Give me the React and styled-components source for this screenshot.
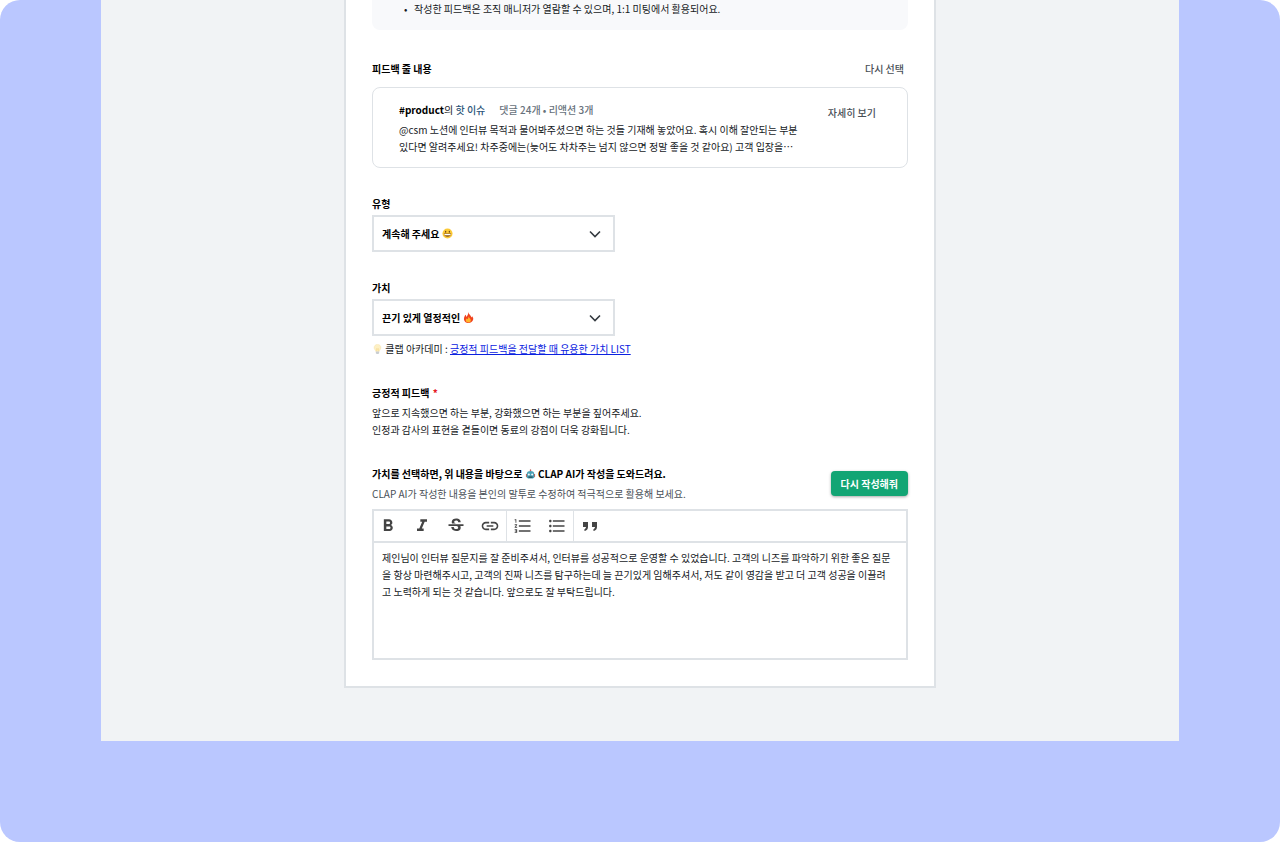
import React from "react";
import styled, { createGlobalStyle } from "styled-components";
import {
  MdFormatBold,
  MdFormatItalic,
  MdStrikethroughS,
  MdInsertLink,
  MdFormatListNumbered,
  MdFormatListBulleted,
} from "react-icons/md";

//toolbar buttons of the editor, every inner array is one group
const toolGroups = [
  [
    { id: "bold", label: "굵게", icon: <MdFormatBold /> },
    { id: "italic", label: "기울임", icon: <MdFormatItalic /> },
    { id: "strike", label: "취소선", icon: <MdStrikethroughS /> },
    { id: "link", label: "링크", icon: <MdInsertLink /> },
  ],
  [
    { id: "ordered", label: "번호 목록", icon: <MdFormatListNumbered /> },
    { id: "bullet", label: "글머리 목록", icon: <MdFormatListBulleted /> },
  ],
  [{ id: "quote", label: "인용", icon: <QuoteIcon /> }],
];

const feedbackText =
  "제인님이 인터뷰 질문지를 잘 준비주셔서, 인터뷰를 성공적으로 운영할 수 있었습니다. 고객의 니즈를 파악하기 위한 좋은 질문을 항상 마련해주시고, 고객의 진짜 니즈를 탐구하는데 늘 끈기있게 임해주셔서, 저도 같이 영감을 받고 더 고객 성공을 이끌려고 노력하게 되는 것 같습니다. 앞으로도 잘 부탁드립니다.";

function QuoteIcon() {
  return (
    <svg viewBox="0 0 20 20" fill="currentColor">
      <path d="M3 6h5v5c0 2-1 3-3 4l-1-1c1-1 2-2 2-3H3zM12 6h5v5c0 2-1 3-3 4l-1-1c1-1 2-2 2-3h-3z" />
    </svg>
  );
}

const SmileIcon = () => (
  <svg viewBox="0 0 24 24" aria-hidden="true">
    <circle cx="12" cy="12" r="11" fill="#fbc936" />
    <ellipse cx="8" cy="8" rx="1.4" ry="2.2" fill="#6b3f12" />
    <ellipse cx="16" cy="8" rx="1.4" ry="2.2" fill="#6b3f12" />
    <path d="M4 12h16c0 4-3 7-8 7s-8-3-8-7z" fill="#8a5417" />
    <path d="M5 13h14c0 2-1 3-2 3H7c-1 0-2-1-2-3z" fill="#fff" />
  </svg>
);

const FireIcon = () => (
  <svg viewBox="0 0 24 24" aria-hidden="true">
    <path
      d="M11 0c1 5 7 7 7 12l2-3c2 3 3 5 2 8-1 4-5 7-10 7S2 20 2 15c0-4 2-6 3-9 2 1 2 3 2 5 3-3 5-6 4-11z"
      fill="#f0431e"
    />
    <path
      d="M12 9c1 4 5 5 5 9 0 3-2 5-5 5s-6-2-6-5c0-2 1-3 2-4l2 2c1-2 2-4 2-7z"
      fill="#ffb52b"
    />
  </svg>
);

const BulbIcon = () => (
  <svg viewBox="0 0 24 24" aria-hidden="true">
    <path
      d="M12 1c-5 0-8 3-8 8 0 4 3 5 4 9h8c1-4 4-5 4-9 0-5-3-8-8-8z"
      fill="#fdf0c4"
      stroke="#f6dd9c"
    />
    <path d="M10 17V11l2 1 2-1v6" fill="none" stroke="#f0c768" />
    <path d="M8 18h8v4l-2 2h-4l-2-2z" fill="#c9cdd1" />
  </svg>
);

const RobotIcon = () => (
  <svg viewBox="0 0 24 24" aria-hidden="true">
    <path d="M11 1h2v6h-2z" fill="#8a969c" />
    <circle cx="12" cy="3" r="2" fill="#d9534a" />
    <path d="M1 12h22v7H1z" fill="#d0574b" />
    <path d="M3 12c0-4 3-7 9-7s9 3 9 7v8l-3 3H6l-3-3z" fill="#4a9fb5" />
    <circle cx="8" cy="13" r="2.4" fill="#f3fbff" />
    <circle cx="16" cy="13" r="2.4" fill="#f3fbff" />
    <path d="M7 18h10v3H7z" fill="#24444f" />
  </svg>
);

const ChevronIcon = () => (
  <svg viewBox="0 0 12 12" aria-hidden="true">
    <path d="M1 3.5l5 5 5-5" fill="none" stroke="#343a40" strokeWidth="1.6" />
  </svg>
);

//label + native select, the emoji is drawn over the select right after the text
const SelectField = ({ id, label, value, emoji, emojiLeft }) => {
  return (
    <Field>
      <FieldLabel htmlFor={id}>{label}</FieldLabel>
      <SelectWrapper>
        <Select id={id} defaultValue={value}>
          <option value={value}>{value}</option>
        </Select>
        <SelectEmoji $left={emojiLeft}>{emoji}</SelectEmoji>
        <SelectArrow>
          <ChevronIcon />
        </SelectArrow>
      </SelectWrapper>
    </Field>
  );
};

const App = () => {
  return (
    <>
      <GlobalStyle />
      <Backdrop>
        <Page>
          <Card>
            <Notice>
              <li>
                작성한 피드백은 조직 매니저가 열람할 수 있으며, 1:1 미팅에서
                활용되어요.
              </li>
            </Notice>

            <SectionHeader>
              <Title>피드백 줄 내용</Title>
              <TextButton type="button">다시 선택</TextButton>
            </SectionHeader>
            <Issue>
              <IssueBody>
                <IssueMeta>
                  <span>
                    <strong>#product</strong>의 <em>핫 이슈</em>
                  </span>
                  <small>댓글 24개 • 리액션 3개</small>
                </IssueMeta>
                <p>
                  @csm 노션에 인터뷰 목적과 물어봐주셨으면 하는 것들 기재해
                  놓았어요. 혹시 이해 잘안되는 부분
                  <br />
                  있다면 알려주세요! 차주중에는(늦어도 차차주는 넘지 않으면 정말
                  좋을 것 같아요) 고객 입장을⋯
                </p>
              </IssueBody>
              <TextButton type="button">자세히 보기</TextButton>
            </Issue>

            <SelectField
              id="type"
              label="유형"
              value="계속해 주세요"
              emoji={<SmileIcon />}
              emojiLeft={70}
            />
            <SelectField
              id="value"
              label="가치"
              value="끈기 있게 열정적인"
              emoji={<FireIcon />}
              emojiLeft={91}
            />
            <Hint>
              <Emoji>
                <BulbIcon />
              </Emoji>{" "}
              클랩 아카데미 :{" "}
              <a href="#list">긍정적 피드백을 전달할 때 유용한 가치 LIST</a>
            </Hint>

            <Guide>
              <Title>
                긍정적 피드백 <Required>*</Required>
              </Title>
              <p>
                앞으로 지속했으면 하는 부분, 강화했으면 하는 부분을 짚어주세요.
                <br />
                인정과 감사의 표현을 곁들이면 동료의 강점이 더욱 강화됩니다.
              </p>
            </Guide>

            <AiRow>
              <div>
                <Title>
                  가치를 선택하면, 위 내용을 바탕으로{" "}
                  <Emoji>
                    <RobotIcon />
                  </Emoji>{" "}
                  CLAP AI가 작성을 도와드려요.
                </Title>
                <SubText>
                  CLAP AI가 작성한 내용을 본인의 말투로 수정하여 적극적으로
                  활용해 보세요.
                </SubText>
              </div>
              <PrimaryButton type="button">다시 작성해줘</PrimaryButton>
            </AiRow>

            <Editor>
              <Toolbar>
                {toolGroups.map((group) => {
                  return (
                    <ToolGroup key={group[0].id}>
                      {group.map(({ id, label, icon }) => (
                        <ToolButton key={id} type="button" aria-label={label}>
                          {icon}
                        </ToolButton>
                      ))}
                    </ToolGroup>
                  );
                })}
              </Toolbar>
              <TextArea aria-label="긍정적 피드백" defaultValue={feedbackText} />
            </Editor>
          </Card>
        </Page>
      </Backdrop>
    </>
  );
};

const GlobalStyle = createGlobalStyle`
  * {
    box-sizing: border-box;
    margin: 0;
    padding: 0;
  }
  body {
    background: #fff;
    color: #16191d;
    font-family: "Noto Sans CJK KR", sans-serif;
    font-size: 10px;
    line-height: 17px;
  }
  button,
  select,
  textarea {
    font: inherit;
    color: inherit;
  }
`;

const Backdrop = styled.div`
  min-height: 100vh;
  padding: 0 101px 101px;
  border-radius: 20px;
  background: #bac7ff;
`;

const Page = styled.main`
  padding-bottom: 53px;
  background: #f1f3f5;
`;

const Card = styled.form`
  max-width: 592px;
  margin: 0 auto;
  padding: 0 26px 26px;
  border: 2px solid #dee2e6;
  border-top: 0;
  background: #fff;
`;

const Notice = styled.ul`
  padding: 0 16px 13px 42px;
  border-radius: 0 0 8px 8px;
  background: #f8f9fb;
  list-style: none;
  li::before {
    content: "•";
    display: inline-block;
    width: 10px;
    margin-left: -10px;
  }
`;

const SectionHeader = styled.div`
  display: flex;
  justify-content: space-between;
  align-items: center;
  margin: 30px 4px 10px 0;
`;

const Title = styled.h2`
  font-size: 10px;
  font-weight: 700;
  line-height: 17px;
  color: #000;
`;

const TextButton = styled.button`
  border: 0;
  background: transparent;
  color: #495057;
  font-weight: 500;
  cursor: pointer;
`;

const Issue = styled.section`
  display: flex;
  justify-content: space-between;
  align-items: flex-start;
  padding: 13px 31px 12px 26px;
  border: 1px solid #dee2e6;
  border-radius: 8px;
  ${TextButton} {
    margin-top: 3px;
  }
`;

const IssueBody = styled.div`
  p {
    margin-top: 3px;
  }
`;

const IssueMeta = styled.div`
  display: flex;
  gap: 14px;
  strong {
    color: #000;
  }
  em {
    font-style: normal;
    font-weight: 500;
    color: #2c5579;
  }
  small {
    font-size: 10px;
    font-weight: 500;
    color: #68727c;
  }
`;

const Field = styled.div`
  margin-top: 27px;
`;

const FieldLabel = styled.label`
  display: block;
  margin-bottom: 3px;
  font-weight: 700;
  color: #000;
`;

const SelectWrapper = styled.div`
  position: relative;
  max-width: 243px;
`;

const Select = styled.select`
  display: block;
  width: 100%;
  height: 37px;
  padding: 0 32px 0 8px;
  border: 2px solid #dee2e6;
  border-radius: 0;
  background: #fff;
  color: #000;
  font-weight: 700;
  appearance: none;
`;

//drawn over the select so clicks have to go through
const SelectEmoji = styled.span`
  position: absolute;
  top: 13px;
  left: ${({ $left }) => $left}px;
  width: 11px;
  height: 11px;
  pointer-events: none;
  svg {
    display: block;
  }
`;

const SelectArrow = styled.span`
  position: absolute;
  top: 13px;
  right: 14px;
  width: 12px;
  height: 12px;
  pointer-events: none;
  svg {
    display: block;
  }
`;

const Emoji = styled.span`
  display: inline-block;
  width: 11px;
  height: 10px;
  vertical-align: -1px;
  svg {
    display: block;
    width: 100%;
    height: 100%;
  }
`;

const Hint = styled.p`
  margin-top: 4px;
  a {
    color: #0b22e0;
  }
`;

const Guide = styled.div`
  margin-top: 27px;
  p {
    margin-top: 3px;
  }
`;

const Required = styled.span`
  margin-left: 1px;
  color: #e5161d;
`;

const AiRow = styled.div`
  display: flex;
  justify-content: space-between;
  align-items: center;
  margin: 27px 0 7px;
`;

const SubText = styled.p`
  margin-top: 3px;
  color: #495057;
`;

const PrimaryButton = styled.button`
  height: 25px;
  padding: 0 10px;
  border: 0;
  border-radius: 4px;
  background: #12a574;
  box-shadow: 0 1px 3px rgba(0, 0, 0, 0.35);
  color: #fff;
  font-weight: 700;
  cursor: pointer;
`;

const Editor = styled.div`
  border: 2px solid #dee2e6;
`;

const Toolbar = styled.div`
  display: flex;
  height: 32px;
  border-bottom: 2px solid #dee2e6;
`;

const ToolGroup = styled.div`
  display: flex;
  gap: 6px;
  padding: 0 2px;
  &:first-child {
    padding-left: 0;
  }
  & + & {
    border-left: 1px solid #dee2e6;
  }
`;

const ToolButton = styled.button`
  display: grid;
  place-items: center;
  width: 28px;
  border: 0;
  background: transparent;
  color: #444;
  cursor: pointer;
  svg {
    width: 20px;
    height: 20px;
  }
`;

const TextArea = styled.textarea`
  display: block;
  width: 100%;
  height: 115px;
  padding: 6px 14px 6px 8px;
  border: 0;
  outline: none;
  resize: none;
`;

export default App;
